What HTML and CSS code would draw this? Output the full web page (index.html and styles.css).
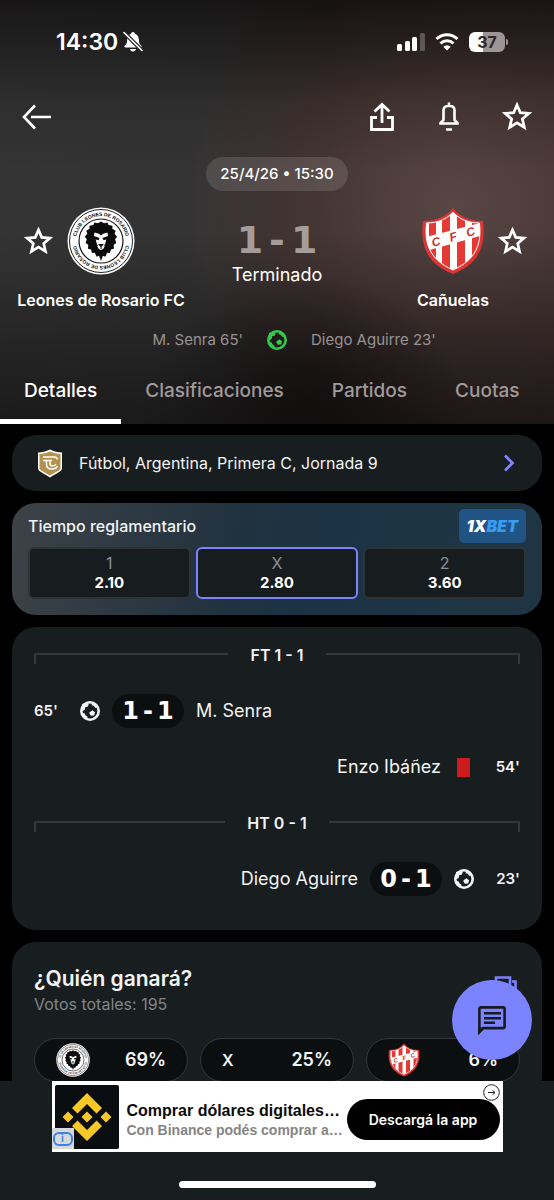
FILE: index.html
```html
<!DOCTYPE html>
<html lang="es">
	<head>
		<meta charset="UTF-8">
		<meta name="viewport" content="width=device-width, initial-scale=1">
		<title>Leones de Rosario FC - Cañuelas</title>
		<link rel="stylesheet" href="styles.css">
	</head>
	<body>
		<!-- shared icons -->
		<svg class="defs" aria-hidden="true">
			<symbol id="star" viewBox="0 0 28 28">
				<path d="M14 2.800l3.100 7.200 7.900.7-6 5.200 1.800 7.700L14 19.500l-6.800 4.100 1.800-7.700-6-5.200 7.900-.7z" fill="none" stroke="currentColor" stroke-width="2.600"/>
			</symbol>
			<symbol id="ball" viewBox="0 0 20 20">
				<circle cx="10" cy="10" r="8.700" fill="none" stroke="currentColor" stroke-width="2.600"/>
				<path d="M12.300 9.300l2.800 1.900-.9 3.300-3.400.2-1.700-2.900zM2 3l5-1.500 1.800 2.300-1.300 2-2.300.5-.5 2.800-3 1.200zM12.500 1.500l5.500 4-1.700 1.600-1.500-.5-.9-1.800-2.400-.6zM1.500 12l3 .2 1.200 2.300 1.600 1 .5 3L4 17.500zM18.800 12l-2.300 4.500-3.500 2 .8-2.200 2.200-1z" fill="currentColor"/>
			</symbol>
		</svg>

		<header class="match">
			<div class="statusbar">
				<div class="clock">
					<span>14:30</span>
					<svg width="20" height="22" viewBox="0 0 20 22">
						<path d="M10 1c-1 0-1.800.8-1.900 1.700C5.200 3.600 4.200 6 4.100 9c-.1 3-.7 4.300-2.400 5.800-.7.700-.4 1.700.6 1.700h15.400c1 0 1.300-1 .6-1.700-1.700-1.500-2.300-2.800-2.400-5.800-.1-3-1.100-5.400-4-6.300C11.800 1.800 11 1 10 1zM7 18h6c-.3 1.500-1.400 2.500-3 2.500S7.300 19.500 7 18z" fill="#fff"/>
						<path d="M1 1.500l18 18" stroke="#2a2a2b" stroke-width="4"/>
						<path d="M1 1.500l18 18" stroke="#fff" stroke-width="1.600" stroke-linecap="round"/>
					</svg>
				</div>
				<div class="signals">
					<svg width="28" height="18" viewBox="0 0 28 18" fill="#fff">
						<rect x="0" y="11" width="5" height="7" rx="1.500"/>
						<rect x="8" y="8" width="5" height="10" rx="1.500"/>
						<rect x="15" y="4" width="5" height="14" rx="1.500"/>
						<rect x="23" y="0" width="5" height="18" rx="1.500" opacity=".25"/>
					</svg>
					<svg width="24" height="18" viewBox="0 0 24 18">
						<path d="M1.500 6a15 15 0 0 1 21 0M5.500 10.500a9.300 9.300 0 0 1 13 0" fill="none" stroke="#fff" stroke-width="3"/>
						<path d="M12 17.500l-3.700-3.800a5.300 5.300 0 0 1 7.400 0z" fill="#fff"/>
					</svg>
					<span class="battery">37</span>
				</div>
			</div>

			<div class="toolbar">
				<button class="icon-btn" aria-label="Volver">
					<svg width="30" height="28" viewBox="0 0 30 28" fill="none" stroke="#fff" stroke-width="2.600"><path d="M13 2.500L2 14l11 11.500M9 14h20"/></svg>
				</button>
				<div class="actions">
					<button class="icon-btn" aria-label="Compartir">
						<svg width="28" height="30" viewBox="0 0 28 30" fill="none" stroke="#fff" stroke-width="2.800"><path d="M14 21V2.500M6.500 9.500L14 2.500l7.500 7M9 15.500H3.500v12h21v-12H19"/></svg>
					</button>
					<button class="icon-btn" aria-label="Notificaciones">
						<svg width="28" height="30" viewBox="0 0 28 30" fill="none" stroke="#fff" stroke-width="2.600"><path d="M14 .5v3M5.500 21.500v-.5l3-3V8.500q0-4.500 4.500-4.500h2q4.500 0 4.500 4.500V18l3 3v.5zM11 27.500h6"/></svg>
					</button>
					<button class="icon-btn" aria-label="Favorito"><svg width="30" height="30"><use href="#star"/></svg></button>
				</div>
			</div>

			<div class="date"><time>25/4/26 • 15:30</time></div>

			<div class="teams">
				<div class="team">
					<div class="crest">
						<button class="icon-btn" aria-label="Seguir a Leones de Rosario FC"><svg width="29" height="29"><use href="#star"/></svg></button>
						<svg width="68" height="68" viewBox="0 0 68 68">
							<g id="lion">
								<circle cx="34" cy="34" r="33.500" fill="#fff"/>
								<circle cx="34" cy="34" r="31.500" fill="none" stroke="#222" stroke-width="1"/>
								<circle cx="34" cy="34" r="22" fill="none" stroke="#111" stroke-width="1.200"/>
								<path id="ringTop" d="M9 34a25 25 0 0 1 50 0" fill="none"/>
								<path id="ringBottom" d="M59 34a25 25 0 0 1-50 0" fill="none"/>
								<text class="ring"><textPath href="#ringTop" startOffset="50%">CLUB LEONES DE ROSARIO</textPath></text>
								<text class="ring"><textPath href="#ringBottom" startOffset="50%">CLUB LEONES DE ROSARIO</textPath></text>
								<path d="M34 14.500l3 1.800 3.500-.8 1 2.400 4 .8-.2 3 3.400 2-1.200 3 2.600 3-2 2.500 1.200 3.800-2.600 1.700.2 4-3 .8-1 3.500-2.800-.2-1.800 4-2.400-1L34 54l-2-5.200-2.400 1-1.800-4-2.800.2-1-3.500-3-.8.2-4-2.600-1.700 1.200-3.800-2-2.500 2.600-3-1.200-3 3.400-2-.2-3 4-.8 1-2.400 3.500.8z" fill="#0b0b0b"/>
								<path d="M27.500 25.500l4.500 1.300 2 1.700 2-1.700 4.500-1.300.5 3-2 4.500-.5 5-2.300 4-2.200 1-2.200-1-2.300-4-.5-5-2-4.500z" fill="#fff"/>
								<path d="M27 29l5.500 2-1 2.200-3.500-1zM41 29l-5.500 2 1 2.200 3.500-1zM31 37h6l-3 3.200zM33.500 39h1v3h-1zM28.500 34l2.500 5-1.500.5zM39.500 34L37 39l1.500.5z" fill="#0b0b0b"/>
							</g>
						</svg>
						<i></i>
					</div>
					<h2>Leones de Rosario FC</h2>
				</div>
				<div class="result">
					<div class="score"><b>1</b> <b>-</b> <b>1</b></div>
					<p>Terminado</p>
				</div>
				<div class="team">
					<div class="crest">
						<i></i>
						<svg width="62" height="68" viewBox="0 0 62 68">
							<g id="shield">
								<clipPath id="shieldClip"><path d="M31 5c6 7 15 11 26.500 11 1.500 16 .5 35-26.500 47C4 51 3 32 4.500 16 16 16 25 12 31 5z"/></clipPath>
								<path d="M31 1c6 7.500 15 13 30 13 2 18 1 41-30 53C0 55-1 32 1 14 16 14 25 8.500 31 1z" fill="#df3532"/>
								<g clip-path="url(#shieldClip)">
									<path d="M0 0h62v68H0z" fill="#fff"/>
									<path d="M7 0h7v68H7zM20 0h8v68h-8zM35 0h8v68h-8zM50 0h7v68h-7z" fill="#e53935"/>
									<path d="M0 31L62 15v13L0 45z" fill="#fff"/>
								</g>
								<path d="M31 5c6 7 15 11 26.500 11 1.500 16 .5 35-26.500 47C4 51 3 32 4.500 16 16 16 25 12 31 5z" fill="none" stroke="#fff" stroke-width="1"/>
								<text class="cfc" transform="rotate(-16 31 29)" x="31" y="34">C&#160;&#160;&#160;F&#160;&#160;&#160;C</text>
							</g>
						</svg>
						<button class="icon-btn" aria-label="Seguir a Cañuelas"><svg width="29" height="29"><use href="#star"/></svg></button>
					</div>
					<h2>Cañuelas</h2>
				</div>
			</div>

			<div class="scorers">
				<span class="home">M. Senra 65'</span>
				<svg width="20" height="20"><use href="#ball"/></svg>
				<span>Diego Aguirre 23'</span>
			</div>

			<nav class="tabs">
				<a href="#" class="active">Detalles</a>
				<a href="#">Clasificaciones</a>
				<a href="#">Partidos</a>
				<a href="#">Cuotas</a>
			</nav>
		</header>

		<main>
			<a href="#" class="card league">
				<svg width="26" height="29" viewBox="0 0 26 29">
					<path d="M13 .5c4 2 8 3 12 3v16c0 3-7 5.500-12 9-5-3.500-12-6-12-9v-16c4 0 8-1 12-3z" fill="#fff"/>
					<path d="M13 2.500c3.500 1.600 7 2.500 10.500 2.500v14c0 2.500-6 4.500-10.500 7.500C8.500 23.500 2.500 21.500 2.500 19V5C6 5 9.500 4.100 13 2.500z" fill="#b3924f"/>
					<path d="M6 8h11q3 0 3.500 2.500M6 11.500h9M9.500 12v3q0 5 5 5t6-3M13 12v2.500q0 2.500 2.500 2.500t3.500-2" fill="none" stroke="#fff" stroke-width="1.500"/>
				</svg>
				<span>Fútbol, Argentina, Primera C, Jornada 9</span>
				<svg width="12" height="18" viewBox="0 0 12 18" fill="none" stroke="#7c83ff" stroke-width="2.800"><path d="M2 1.500L9.500 9 2 16.500"/></svg>
			</a>

			<section class="card odds">
				<div class="odds-head">
					<h3>Tiempo reglamentario</h3>
					<a href="#" class="xbet">1X<span>BET</span></a>
				</div>
				<div class="odds-row">
					<button><span>1</span><b>2.10</b></button>
					<button class="win"><span>X</span><b>2.80</b></button>
					<button><span>2</span><b>3.60</b></button>
				</div>
			</section>

			<section class="card timeline">
				<div class="period"><span>FT 1 - 1</span></div>
				<div class="event">
					<time>65'</time>
					<svg width="20" height="20"><use href="#ball"/></svg>
					<div class="score small"><b>1</b> <b>-</b> <b>1</b></div>
					<span>M. Senra</span>
				</div>
				<div class="event away">
					<time>54'</time>
					<div class="red-card"></div>
					<span>Enzo Ibáñez</span>
				</div>
				<div class="period"><span>HT 0 - 1</span></div>
				<div class="event away">
					<time>23'</time>
					<svg width="20" height="20"><use href="#ball"/></svg>
					<div class="score small"><b>0</b> <b>-</b> <b>1</b></div>
					<span>Diego Aguirre</span>
				</div>
			</section>

			<section class="card vote">
				<div class="vote-head">
					<div>
						<h3>¿Quién ganará?</h3>
						<p>Votos totales: 195</p>
					</div>
					<svg width="28" height="24" viewBox="0 0 28 24" fill="none" stroke="#7c83ff" stroke-width="2.600"><path d="M7 1.500h14v21H7zM7 5.500H1.500v13H7M23 5.500h3.500v13H23"/></svg>
				</div>
				<div class="vote-row">
					<button><svg width="34" height="34" viewBox="0 0 68 68"><use href="#lion"/></svg><b>69%</b></button>
					<button><b class="draw">X</b><b>25%</b></button>
					<button><svg width="32" height="34" viewBox="0 0 62 68"><use href="#shield"/></svg><b>6%</b></button>
				</div>
			</section>
		</main>

		<button class="chat" aria-label="Chat">
			<svg width="28" height="29" viewBox="0 0 28 29"><path d="M1.400 26V3q0-1.600 1.600-1.600h22q1.600 0 1.600 1.600v17.500q0 1.600-1.600 1.600H5.300z" fill="none" stroke="#151b1e" stroke-width="2.600"/><path d="M0 21v8l7-7zM6 6h17v2.500H6zM6 11h17v2.500H6zM6 15.500h11V18H6z" fill="#151b1e"/></svg>
		</button>

		<footer class="bottom">
			<div class="ad">
				<div class="ad-logo">
					<svg width="50" height="50" viewBox="0 0 50 50" fill="#f8c829"><path d="M25 1l15 15-5.500 5.500L25 12l-9.500 9.500L10 16zM25 49l15-15-5.500-5.500L25 38l-9.500-9.500L10 34zM25 19.500l5.500 5.500-5.500 5.500-5.500-5.500zM6 19.500l5.500 5.500L6 30.500.5 25zM44 19.500l5.500 5.500-5.500 5.500-5.500-5.500z"/></svg>
					<div class="info"><span>i</span></div>
				</div>
				<div class="ad-text">
					<h4>Comprar dólares digitales…</h4>
					<p>Con Binance podés comprar a…</p>
				</div>
				<button class="ad-btn">Descargá la app</button>
				<button class="ad-arrow" aria-label="Abrir anuncio">
					<svg width="17" height="17" viewBox="0 0 17 17" fill="none" stroke="#222"><circle cx="8.500" cy="8.500" r="7.800"/><path d="M5 8.500h7M9.500 6.200L12 8.500l-2.500 2.300"/></svg>
				</button>
			</div>
			<div class="home-bar"></div>
		</footer>
	</body>
</html>
```

FILE: styles.css
```css
*{
	box-sizing: border-box;
}
body,h2,h3,h4,p{
	margin: 0;
}
body{
	background: #000;
	color: #f2f4f5;
	font-family: Inter, Roboto, "Liberation Sans", sans-serif;
	font-size: 16px;
	line-height: 20px;
}
a{
	color: inherit;
	text-decoration: none;
}
button{
	font: inherit;
	color: inherit;
	background: none;
	border: none;
	padding: 0;
	cursor: pointer;
}
svg{
	display: block;
	flex: none;
}
.defs{
	position: absolute;
	width: 0;
	height: 0;
}
.ring{
	font: bold 5px "Liberation Sans", sans-serif;
	text-anchor: middle;
	fill: #111;
}
.cfc{
	font: bold italic 12px "Liberation Sans", sans-serif;
	text-anchor: middle;
	fill: #c8322f;
}

/* header */
.match{
	background:
		linear-gradient(rgba(14,12,12,.75), rgba(14,12,12,.15) 24%, rgba(14,12,12,0) 40%, rgba(14,12,12,0) 55%, rgba(14,12,12,.65)),
		radial-gradient(ellipse 30% 35% at 55% 100%, rgba(8,6,6,.7), rgba(8,6,6,0)),
		radial-gradient(ellipse 50% 60% at 82% 48%, #574644, rgba(78,61,59,.7) 50%, rgba(56,40,40,0)),
		linear-gradient(90deg, #343435, #333 38%, #2f2424 60%, #3a2a29);
}
.statusbar{
	display: flex;
	justify-content: space-between;
	align-items: center;
	height: 84px;
	padding: 0 49px 0 56px;
}
.clock{
	display: flex;
	align-items: center;
	gap: 5px;
	font-size: 23px;
	font-weight: 600;
	color: #fff;
}
.signals{
	display: flex;
	align-items: center;
	gap: 10px;
}
.battery{
	position: relative;
	width: 36px;
	border-radius: 6px;
	background: linear-gradient(90deg, #fff 38%, #9d9595 38%);
	color: #332827;
	font-size: 16px;
	font-weight: 700;
	text-align: center;
}
.battery:after{
	content: "";
	position: absolute;
	left: 37px;
	top: 7px;
	width: 2px;
	height: 6px;
	border-radius: 0 2px 2px 0;
	background: #9d9595;
}
.toolbar{
	display: flex;
	justify-content: space-between;
	align-items: center;
	height: 66px;
	padding: 0 22px;
	color: #fff;
}
.actions{
	display: flex;
	align-items: center;
	gap: 39px;
}
.date{
	display: flex;
	justify-content: center;
	padding-top: 7px;
}
.date time{
	padding: 7px 14px;
	border-radius: 17px;
	background: rgba(255,255,255,.12);
	color: #fff;
	font-size: 15px;
	font-weight: 500;
}
.teams{
	display: grid;
	grid-template-columns: 1fr 150px 1fr;
	padding-top: 16px;
	color: #fff;
}
.team{
	display: flex;
	flex-direction: column;
	align-items: center;
	gap: 15px;
}
.crest{
	display: grid;
	grid-template-columns: 29px auto 29px;
	gap: 14px;
	align-items: center;
}
.team h2{
	font-size: 16px;
	line-height: 20px;
	font-weight: 600;
}
.result{
	padding-top: 14px;
	text-align: center;
	font-size: 18px;
}
.score{
	display: flex;
	justify-content: center;
	align-items: center;
	gap: 6px;
	font-family: "DejaVu Sans", sans-serif;
	font-size: 38px;
	line-height: 38px;
	color: #a49d9c;
}
.result p{
	padding-top: 4px;
	line-height: 24px;
}
.scorers{
	display: grid;
	grid-template-columns: 1fr 20px 1fr;
	gap: 24px;
	padding: 20px 0;
	font-size: 15px;
	color: #989393;
}
.scorers .home{
	text-align: right;
}
.scorers svg{
	color: #36c84b;
}
.tabs{
	display: flex;
	font-size: 19px;
	font-weight: 500;
	line-height: 24px;
	color: #a09a9a;
}
.tabs a{
	padding: 9px 24px 16px;
	border-bottom: 5px solid transparent;
}
.tabs .active{
	color: #fff;
	border-color: #fff;
}

/* cards */
main{
	display: flex;
	flex-direction: column;
	gap: 12px;
	padding: 11px 12px 80px;
}
.card{
	border-radius: 24px;
	background: #181d1f;
}
.league{
	display: flex;
	align-items: center;
	gap: 16px;
	height: 56px;
	padding: 0 27px 0 25px;
}
.league span{
	flex: 1;
}
.odds{
	padding: 6px 16px 16px;
	background: linear-gradient(100deg, #3d4247, #20323f 42%, #1b3345 60%, #1f3543);
}
.odds-head{
	display: flex;
	justify-content: space-between;
	align-items: center;
}
h3{
	font-size: 16px;
	font-weight: 500;
}
.xbet{
	padding: 7px 8px;
	border-radius: 5px;
	background: #1f5485;
	color: #fff;
	font-size: 16px;
	font-weight: 900;
	font-style: italic;
}
.xbet span{
	color: #3a9cf0;
}
.odds-row{
	display: grid;
	grid-template-columns: repeat(3, 1fr);
	gap: 5px;
	padding-top: 4px;
}
.odds-row button{
	display: flex;
	flex-direction: column;
	align-items: center;
	padding: 4px 0;
	border: 2px solid #2d3437;
	border-radius: 6px;
	background: #171c1e;
}
.odds-row .win{
	border-color: #7c83ff;
}
.odds-row span{
	color: #8b9092;
}
.odds-row b{
	font-size: 15px;
	font-weight: 700;
	color: #fff;
}

/* timeline */
.timeline{
	padding: 0 22px 23px;
}
.period{
	display: flex;
	align-items: center;
	gap: 22px;
	height: 56px;
	font-weight: 600;
}
.period:before,
.period:after{
	content: "";
	flex: 1;
	height: 9px;
	margin-top: 7px;
	border: 2px solid #33383a;
	border-width: 2px 0 0 2px;
}
.period:after{
	border-width: 2px 2px 0 0;
}
.event{
	display: flex;
	align-items: center;
	gap: 12px;
	height: 56px;
	font-size: 18px;
}
.event time{
	width: 34px;
	font-size: 15px;
	font-weight: 600;
}
.away{
	flex-direction: row-reverse;
}
.away time{
	text-align: right;
}
.score.small{
	gap: 4px;
	width: 72px;
	height: 34px;
	border-radius: 17px;
	background: #0b0f10;
	font-size: 24px;
	line-height: 34px;
	color: #fff;
}
.red-card{
	width: 13px;
	height: 19px;
	margin: 0 4px;
	background: #cf1a1c;
}

/* vote */
.vote{
	padding: 24px 22px 20px;
}
.vote-head{
	display: flex;
	justify-content: space-between;
	align-items: flex-start;
}
.vote-head svg{
	margin: 10px 3px 0 0;
}
.vote-head h3{
	font-size: 21px;
	line-height: 26px;
	font-weight: 600;
}
.vote-head p{
	line-height: 24px;
	color: #80868a;
}
.vote-row{
	display: grid;
	grid-template-columns: repeat(3, 1fr);
	gap: 12px;
	padding-top: 22px;
}
.vote-row button{
	display: flex;
	align-items: center;
	justify-content: space-between;
	height: 44px;
	padding: 0 21px;
	border: 1px solid #33383a;
	border-radius: 22px;
	background: #0b0f10;
}
.vote-row b{
	font-size: 18px;
	font-weight: 600;
}
.vote-row .draw{
	font-size: 16px;
}

/* floating parts */
.chat{
	position: fixed;
	right: 22px;
	bottom: 140px;
	display: flex;
	align-items: center;
	justify-content: center;
	width: 80px;
	height: 80px;
	border-radius: 50%;
	background: #7c83ff;
}
.bottom{
	position: fixed;
	left: 0;
	right: 0;
	bottom: 0;
	height: 119px;
	background: #181d1f;
}
.ad{
	position: relative;
	display: flex;
	align-items: center;
	max-width: 451px;
	height: 71px;
	margin: 0 auto;
	padding: 0 3px;
	background: #fff;
	color: #0b0b0b;
	font-family: "Liberation Sans", sans-serif;
}
.ad-logo{
	position: relative;
	display: flex;
	align-items: center;
	justify-content: center;
	width: 64px;
	height: 64px;
	border-radius: 2px;
	background: #0b0e11;
}
.info{
	position: absolute;
	left: -3px;
	bottom: 0;
	padding: 4px 1px 3px;
	background: #d6d8da;
}
.info span{
	display: block;
	width: 20px;
	height: 14px;
	border: 2px solid #3b82e8;
	border-radius: 6px;
	color: #3b82e8;
	font-size: 10px;
	line-height: 10px;
	font-weight: bold;
	text-align: center;
}
.ad-text{
	flex: 1;
	padding: 7px 0 0 8px;
	white-space: nowrap;
}
.ad-text h4{
	font-size: 16px;
	line-height: 20px;
}
.ad-text p{
	font-size: 14px;
	line-height: 18px;
	font-weight: bold;
	color: #858585;
}
.ad-btn{
	width: 153px;
	height: 41px;
	margin-top: 6px;
	border-radius: 21px;
	background: #000;
	color: #fff;
	font-family: Inter, sans-serif;
	font-size: 14px;
	font-weight: 600;
}
.ad-arrow{
	position: absolute;
	right: 3px;
	top: 3px;
}
.home-bar{
	width: 197px;
	height: 7px;
	margin: 29px auto 0;
	border-radius: 4px;
	background: #fff;
}
```
